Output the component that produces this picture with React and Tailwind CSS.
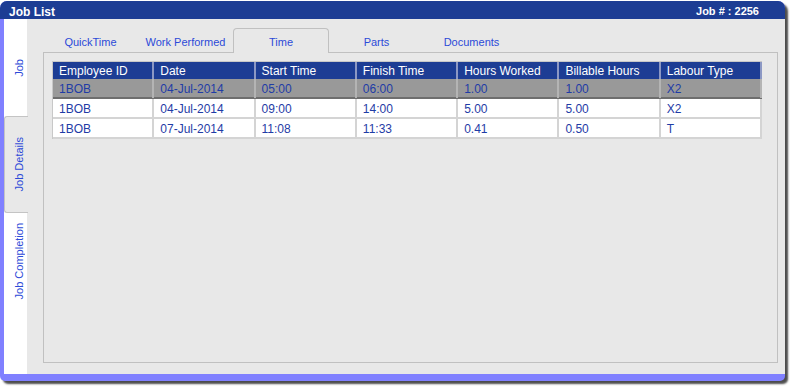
import React from "react";

const columns = [
  "Employee ID",
  "Date",
  "Start Time",
  "Finish Time",
  "Hours Worked",
  "Billable Hours",
  "Labour Type"
];

const rows = [
  ["1BOB", "04-Jul-2014", "05:00", "06:00", "1.00", "1.00", "X2"],
  ["1BOB", "04-Jul-2014", "09:00", "14:00", "5.00", "5.00", "X2"],
  ["1BOB", "07-Jul-2014", "11:08", "11:33", "0.41", "0.50", "T"]
];

const tabs = ["QuickTime", "Work Performed", "Time", "Parts", "Documents"];

function SideTab({ label, selected, top }) {
  return (
    <div
      className={
        selected
          ? "h-[97px] -mr-px relative z-10 bg-[#e8e8e8] border border-r-0 border-[#c4c4c4] rounded-l-[3px] flex items-center justify-center pl-[6px]"
          : top
          ? "flex-1 flex justify-center items-start pt-[10px] pl-[7px]"
          : "h-[97px] flex items-center justify-center pl-[7px]"
      }
    >
      <span className="[writing-mode:vertical-rl] rotate-180 text-[11px] leading-[13px] text-[#2c4ad8] whitespace-nowrap">
        {label}
      </span>
    </div>
  );
}

export default function App() {
  return (
    <div className="w-[791px] h-[386px] bg-white font-['Liberation_Sans',Arial,sans-serif] overflow-hidden">
      <div className="mt-px w-[785px] h-[380px] bg-[#8080ff] rounded-t-[7px] rounded-b-[5px] shadow-[3px_3px_2px_rgba(0,0,0,0.7)] flex flex-col overflow-hidden">
        {/* Title bar */}
        <div className="h-[18px] shrink-0 bg-[#1d3d94] flex items-center justify-between pl-[9px] pr-[26px] pt-[3px] text-white font-bold">
          <span className="text-[12px] leading-[14px]">Job List</span>
          <span className="text-[11px] leading-[13px]">Job # : 2256</span>
        </div>

        {/* Body */}
        <div className="flex-1 flex pl-[4px] pb-[7px] min-h-0">
          {/* Vertical tabs */}
          <div className="w-[23px] shrink-0 bg-white flex flex-col">
            <SideTab label="Job" />
            <SideTab label="Job Details" selected />
            <SideTab label="Job Completion" top />
          </div>

          {/* Content */}
          <div className="flex-1 bg-[#e8e8e8] pl-[16px] pr-[7px] pt-[9px] pb-[11px] flex flex-col">
            <div className="flex h-[24px] shrink-0">
              {tabs.map((t) =>
                t === "Time" ? (
                  <div
                    key={t}
                    className="w-[96px] h-[25px] -mb-px relative z-10 bg-[#e8e8e8] border border-b-0 border-[#c0c0c0] rounded-t-[4px] flex justify-center items-center pt-[3px] text-[11px] text-[#2c4ad8]"
                  >
                    {t}
                  </div>
                ) : (
                  <div
                    key={t}
                    className="w-[95px] h-[24px] flex justify-center items-center pt-[4px] text-[11px] text-[#2c4ad8]"
                  >
                    {t}
                  </div>
                )
              )}
            </div>

            <div className="flex-1 border border-[#c0c0c0] pt-[8px] pl-[8px]">
              <div className="w-[710px] border-t border-l border-[#c8c8c8] text-[12px]">
                <div className="grid grid-cols-7 h-[17px] bg-[#1d3d94] text-white">
                  {columns.map((c) => (
                    <div
                      key={c}
                      className="border-r-2 border-[#8c98c4] px-[6px] flex items-center leading-[14px] whitespace-nowrap"
                    >
                      {c}
                    </div>
                  ))}
                </div>
                {rows.map((r, i) => (
                  <div
                    key={i}
                    className={
                      i === 0
                        ? "grid grid-cols-7 h-[20px] bg-[#999999] border-b-2 border-[#6e6e6e] text-[#1f3ca6]"
                        : "grid grid-cols-7 h-[20px] bg-white border-b-2 border-[#d4d4d4] text-[#1f3ca6]"
                    }
                  >
                    {r.map((v, j) => (
                      <div
                        key={j}
                        className={
                          i === 0
                            ? "border-r-2 border-[#b4b4b4] px-[6px] flex items-center pt-px"
                            : "border-r-2 border-[#d4d4d4] px-[6px] flex items-center pt-px"
                        }
                      >
                        {v}
                      </div>
                    ))}
                  </div>
                ))}
              </div>
            </div>
          </div>
        </div>
      </div>
    </div>
  );
}
